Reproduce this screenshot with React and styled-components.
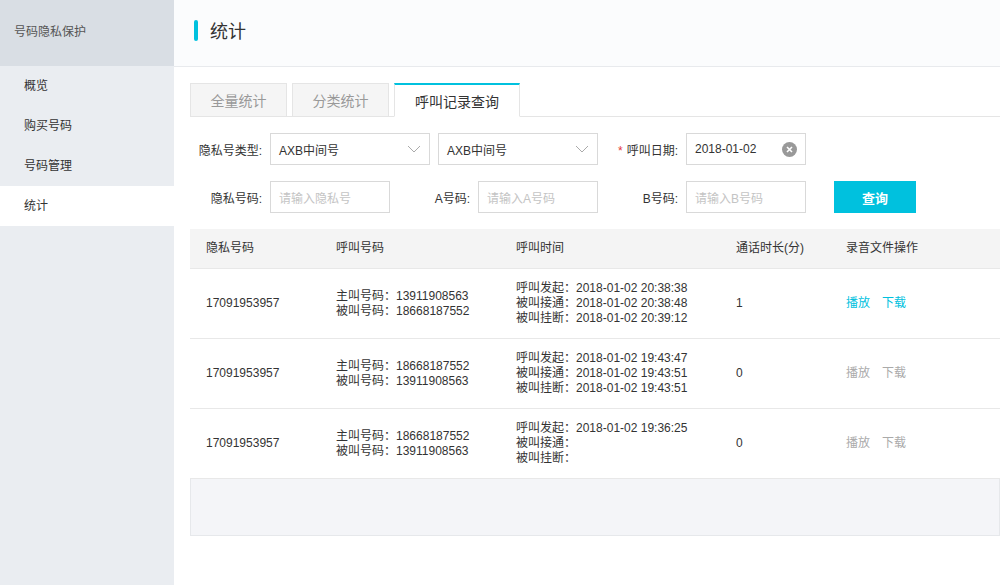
import styled, { createGlobalStyle } from "styled-components";

const GlobalStyle = createGlobalStyle`
  html, body {
    margin: 0;
    padding: 0;
    background: #fff;
  }
  body {
    font-family: "Liberation Sans", "Noto Sans CJK SC", sans-serif;
    font-size: 12px;
    color: #333;
  }
  * { box-sizing: border-box; }
`;

const Layout = styled.div`
  display: flex;
  width: 1000px;
  min-height: 585px;
  overflow: hidden;
`;

const Sidebar = styled.div`
  width: 174px;
  flex-shrink: 0;
  background: #eaedf1;
  display: flex;
  flex-direction: column;
`;

const SideTitle = styled.div`
  height: 66px;
  background: #d9dee4;
  display: flex;
  align-items: center;
  padding: 0 0 6px 14px;
  color: #555;
`;

const MenuItem = styled.div`
  height: 40px;
  display: flex;
  align-items: center;
  padding: 0 0 3px 24px;
  color: #333;
  background: ${(p) => (p.$active ? "#fff" : "transparent")};
`;

const Main = styled.div`
  flex: 1;
  min-width: 0;
  display: flex;
  flex-direction: column;
`;

const Header = styled.div`
  height: 67px;
  background: #fbfcfd;
  border-bottom: 1px solid #e8eaed;
  display: flex;
  align-items: center;
  padding: 0 0 6px 20px;
  gap: 12px;
  flex-shrink: 0;
`;

const TitleBar = styled.span`
  width: 4px;
  height: 21px;
  border-radius: 2px;
  background: #00c1de;
`;

const Title = styled.h1`
  margin: 0;
  font-size: 18px;
  font-weight: normal;
  color: #333;
`;

const Body = styled.div`
  padding: 16px 0 0 16px;
`;

const Tabs = styled.div`
  display: flex;
  gap: 5px;
  height: 34px;
  border-bottom: 1px solid #e5e5e5;
`;

const Tab = styled.div`
  width: ${(p) => p.$w}px;
  height: 34px;
  display: flex;
  align-items: center;
  justify-content: center;
  font-size: 14px;
  border: 1px solid #e5e5e5;
  border-top: ${(p) => (p.$active ? "2px solid #00c1de" : "1px solid #e5e5e5")};
  border-bottom: ${(p) => (p.$active ? "1px solid #fff" : "1px solid #e5e5e5")};
  background: ${(p) => (p.$active ? "#fff" : "#f5f5f5")};
  color: ${(p) => (p.$active ? "#333" : "#999")};
  margin-bottom: -1px;
`;

const Form = styled.div`
  display: flex;
  flex-direction: column;
  gap: 16px;
  padding: 16px 0 16px;
`;

const FormRow = styled.div`
  display: flex;
  align-items: center;
  height: 32px;
`;

const Label = styled.label`
  width: 80px;
  padding-right: 8px;
  text-align: right;
  color: #333;
  white-space: nowrap;
  flex-shrink: 0;
`;

const Star = styled.span`
  color: #e4393c;
  margin-right: 4px;
`;

const Field = styled.div`
  width: ${(p) => p.$w}px;
  height: 32px;
  border: 1px solid #d9d9d9;
  background: #fff;
  display: flex;
  align-items: center;
  justify-content: space-between;
  padding: 0 8px;
  margin-right: ${(p) => p.$mr ?? 8}px;
  color: ${(p) => (p.$placeholder ? "#c4c4c4" : "#333")};
  flex-shrink: 0;
`;

const ClearIcon = styled.span`
  width: 15px;
  height: 15px;
  border-radius: 50%;
  background: #999;
  display: flex;
  align-items: center;
  justify-content: center;
`;

const SearchButton = styled.button`
  width: 82px;
  height: 32px;
  margin-left: 28px;
  border: none;
  background: #00c1de;
  color: #fff;
  font-family: inherit;
  font-size: 13px;
  font-weight: bold;
`;

const Table = styled.div`
  display: flex;
  flex-direction: column;
`;

const Row = styled.div`
  display: grid;
  grid-template-columns: 146px 180px 220px 110px 1fr;
  align-items: center;
  height: ${(p) => (p.$head ? 40 : 70)}px;
  background: ${(p) => (p.$head ? "#f4f4f4" : "#fff")};
  border-bottom: 1px solid #e8e8e8;
  line-height: 15px;
  & > div:first-child {
    padding-left: 16px;
  }
`;

const Cell = styled.div`
  white-space: nowrap;
`;

const Link = styled.span`
  color: ${(p) => (p.$disabled ? "#aaa" : "#00c1de")};
  margin-right: 12px;
`;

const EmptyFooter = styled.div`
  height: 57px;
  background: #f4f5f8;
  border: 1px solid #e6e8eb;
  border-top: none;
`;

const Chevron = () => (
  <svg width="14" height="8" viewBox="0 0 14 8" fill="none">
    <path d="M1 1l6 6 6-6" stroke="#aaa" strokeWidth="1" />
  </svg>
);

const records = [
  {
    caller: "13911908563",
    callee: "18668187552",
    times: ["2018-01-02 20:38:38", "2018-01-02 20:38:48", "2018-01-02 20:39:12"],
    duration: "1",
    enabled: true,
  },
  {
    caller: "18668187552",
    callee: "13911908563",
    times: ["2018-01-02 19:43:47", "2018-01-02 19:43:51", "2018-01-02 19:43:51"],
    duration: "0",
    enabled: false,
  },
  {
    caller: "18668187552",
    callee: "13911908563",
    times: ["2018-01-02 19:36:25", "", ""],
    duration: "0",
    enabled: false,
  },
];

const App = () => {
  return (
    <Layout>
      <GlobalStyle />
      <Sidebar>
        <SideTitle>号码隐私保护</SideTitle>
        <MenuItem>概览</MenuItem>
        <MenuItem>购买号码</MenuItem>
        <MenuItem>号码管理</MenuItem>
        <MenuItem $active>统计</MenuItem>
      </Sidebar>
      <Main>
        <Header>
          <TitleBar />
          <Title>统计</Title>
        </Header>
        <Body>
          <Tabs>
            <Tab $w={97}>全量统计</Tab>
            <Tab $w={97}>分类统计</Tab>
            <Tab $w={126} $active>呼叫记录查询</Tab>
          </Tabs>
          <Form>
            <FormRow>
              <Label>隐私号类型:</Label>
              <Field $w={160}>
                AXB中间号
                <Chevron />
              </Field>
              <Field $w={160}>
                AXB中间号
                <Chevron />
              </Field>
              <Label>
                <Star>*</Star>呼叫日期:
              </Label>
              <Field $w={120}>
                2018-01-02
                <ClearIcon>
                  <svg width="7" height="7" viewBox="0 0 7 7">
                    <path d="M1 1l5 5M6 1l-5 5" stroke="#fff" strokeWidth="1.6" />
                  </svg>
                </ClearIcon>
              </Field>
            </FormRow>
            <FormRow>
              <Label>隐私号码:</Label>
              <Field $w={120} $placeholder>请输入隐私号</Field>
              <Label>A号码:</Label>
              <Field $w={120} $placeholder>请输入A号码</Field>
              <Label>B号码:</Label>
              <Field $w={120} $placeholder $mr={0}>请输入B号码</Field>
              <SearchButton>查询</SearchButton>
            </FormRow>
          </Form>
          <Table>
            <Row $head>
              <Cell>隐私号码</Cell>
              <Cell>呼叫号码</Cell>
              <Cell>呼叫时间</Cell>
              <Cell>通话时长(分)</Cell>
              <Cell>录音文件操作</Cell>
            </Row>
            {records.map((r, i) => (
              <Row key={i}>
                <Cell>17091953957</Cell>
                <Cell>
                  主叫号码：{r.caller}
                  <br />
                  被叫号码：{r.callee}
                </Cell>
                <Cell>
                  呼叫发起：{r.times[0]}
                  <br />
                  被叫接通：{r.times[1]}
                  <br />
                  被叫挂断：{r.times[2]}
                </Cell>
                <Cell>{r.duration}</Cell>
                <Cell>
                  <Link $disabled={!r.enabled}>播放</Link>
                  <Link $disabled={!r.enabled}>下载</Link>
                </Cell>
              </Row>
            ))}
            <EmptyFooter />
          </Table>
        </Body>
      </Main>
    </Layout>
  );
};

export default App;
